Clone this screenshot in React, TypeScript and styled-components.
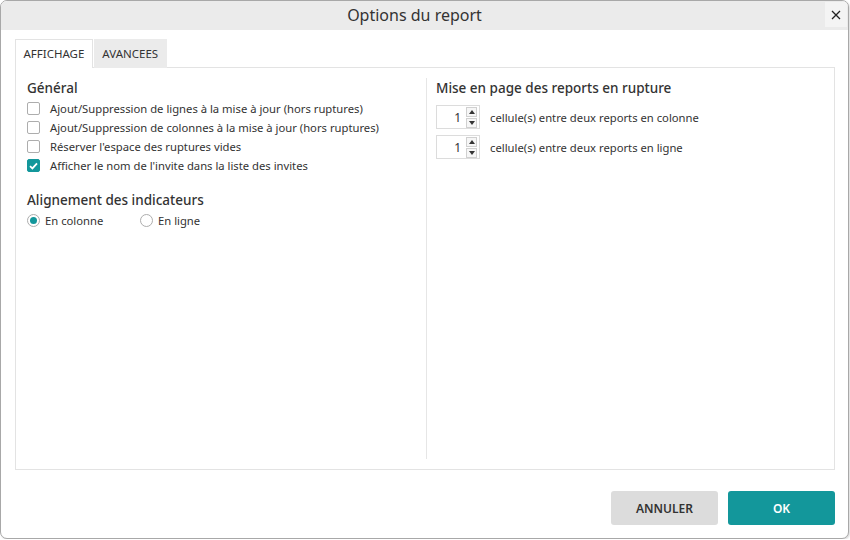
import React from "react";
import styled, { createGlobalStyle } from "styled-components";

const Global = createGlobalStyle`
  html, body { margin: 0; padding: 0; background: #ffffff; }
  body { font-family: "Noto Sans", "Open Sans", sans-serif; color: #333; }
  * { box-sizing: border-box; }
`;

const TEAL = "#13979b";

const Dialog = styled.div`
  width: 849px;
  height: 539px;
  border: 1px solid #a8a8a8;
  border-radius: 7px;
  overflow: hidden;
  background: #fff;
  display: flex;
  flex-direction: column;
  box-shadow: 1px 1px 2px rgba(0,0,0,0.15);
`;

const TitleBar = styled.div`
  height: 29px;
  background: #ebebeb;
  display: flex;
  align-items: center;
  justify-content: center;
  position: relative;
  flex: none;
  padding-right: 20px;
`;

const Title = styled.div`
  font-size: 16px;
  color: #333;
  line-height: 20px;
  margin-top: -2px;
`;

const Close = styled.div`
  position: absolute;
  right: 1px;
  top: 1px;
  width: 22px;
  height: 25px;
  background: #f4f4f4;
  display: flex;
  align-items: center;
  justify-content: center;
`;

const Body = styled.div`
  flex: 1;
  display: flex;
  flex-direction: column;
  padding: 9px 13px 0 14px;
`;

const Tabs = styled.div`
  display: flex;
  height: 28px;
  flex: none;
`;

const Tab = styled.div<{ $active?: boolean }>`
  height: 29px;
  padding: 0 7.5px 2px;
  display: flex;
  align-items: center;
  font-size: 11.5px;
  color: #333;
  background: ${(p) => (p.$active ? "#fff" : "#ebebeb")};
  border: 1px solid ${(p) => (p.$active ? "#e3e3e3" : "#ebebeb")};
  border-bottom: none;
  margin-right: 1px;
  position: relative;
  z-index: 1;
`;

const Panel = styled.div`
  height: 403px;
  border: 1px solid #e3e3e3;
  display: grid;
  grid-template-columns: 410px 1fr;
  padding: 10px 0;
`;

const Column = styled.div<{ $divider?: boolean }>`
  padding: 0 10px 0 ${(p) => (p.$divider ? "9px" : "11px")};
  border-left: ${(p) => (p.$divider ? "1px solid #e6e6e6" : "none")};
`;

const Heading = styled.div<{ $top?: number }>`
  font-size: 13.5px;
  font-weight: 500;
  color: #333;
  line-height: 20px;
  margin-top: ${(p) => p.$top ?? 0}px;
  margin-bottom: 1px;
`;

const CheckRow = styled.label`
  display: flex;
  align-items: center;
  height: 19px;
  font-size: 11.25px;
  color: #333;
`;

const Box = styled.span<{ $on?: boolean }>`
  width: 13px;
  height: 13px;
  border-radius: 2px;
  border: 1px solid ${(p) => (p.$on ? TEAL : "#adadad")};
  background: ${(p) => (p.$on ? TEAL : "#fff")};
  margin-right: 10px;
  display: flex;
  align-items: center;
  justify-content: center;
  flex: none;
`;

const RadioRow = styled.div`
  display: flex;
  align-items: center;
  height: 20px;
  margin-top: -1px;
`;

const RadioItem = styled.label`
  display: flex;
  align-items: center;
  width: 113px;
  font-size: 11.25px;
  color: #333;
`;

const Radio = styled.span<{ $on?: boolean }>`
  width: 13px;
  height: 13px;
  border-radius: 50%;
  border: 1px solid #adadad;
  background: #fff;
  margin-right: 5px;
  display: flex;
  align-items: center;
  justify-content: center;
  flex: none;
  &::after {
    content: "";
    display: ${(p) => (p.$on ? "block" : "none")};
    width: 7px;
    height: 7px;
    border-radius: 50%;
    background: ${TEAL};
  }
`;

const SpinList = styled.div`
  display: flex;
  flex-direction: column;
  gap: 6px;
  margin-top: 7px;
`;

const SpinRow = styled.div`
  display: flex;
  align-items: center;
  font-size: 11.25px;
  color: #333;
`;

const Spin = styled.div`
  width: 44px;
  height: 24px;
  border: 1px solid #dcdcdc;
  display: flex;
  align-items: center;
  margin-right: 10px;
  background: #fff;
`;

const SpinValue = styled.div`
  flex: 1;
  text-align: right;
  padding-right: 5px;
  font-size: 12px;
  color: #333;
`;

const SpinButtons = styled.div`
  display: flex;
  flex-direction: column;
  gap: 1px;
  margin-right: 2px;
`;

const SpinBtn = styled.div`
  width: 11px;
  height: 10px;
  border: 1px solid #d0d0d0;
  background: #f6f6f6;
  display: flex;
  align-items: center;
  justify-content: center;
`;

const Footer = styled.div`
  flex: 1;
  display: flex;
  justify-content: flex-end;
  align-items: center;
  gap: 10px;
  padding-top: 8px;
`;

const Button = styled.button<{ $primary?: boolean }>`
  width: 107px;
  height: 34px;
  border: none;
  border-radius: 3px;
  font-family: "Noto Sans", sans-serif;
  font-size: 12px;
  font-weight: 600;
  color: ${(p) => (p.$primary ? "#fff" : "#333")};
  background: ${(p) => (p.$primary ? TEAL : "#dcdcdc")};
`;

const Check = () => (
  <svg width="9" height="8" viewBox="0 0 9 8">
    <path d="M1 4.2 L3.4 6.4 L8 1.4" fill="none" stroke="#fff" strokeWidth="1.8" />
  </svg>
);

const Arrow = ({ up }: { up?: boolean }) => (
  <svg width="6" height="4" viewBox="0 0 6 4">
    <path d={up ? "M0 4 L3 0 L6 4 Z" : "M0 0 L3 4 L6 0 Z"} fill="#333" />
  </svg>
);

const checks = [
  { label: "Ajout/Suppression de lignes à la mise à jour (hors ruptures)", on: false },
  { label: "Ajout/Suppression de colonnes à la mise à jour (hors ruptures)", on: false },
  { label: "Réserver l'espace des ruptures vides", on: false },
  { label: "Afficher le nom de l'invite dans la liste des invites", on: true },
];

const spins = [
  "cellule(s) entre deux reports en colonne",
  "cellule(s) entre deux reports en ligne",
];

export default function App() {
  return (
    <>
      <Global />
      <Dialog>
        <TitleBar>
          <Title>Options du report</Title>
          <Close>
            <svg width="10" height="10" viewBox="0 0 10 10">
              <path d="M1 1 L9 9 M9 1 L1 9" stroke="#222" strokeWidth="1.3" />
            </svg>
          </Close>
        </TitleBar>
        <Body>
          <Tabs>
            <Tab $active>AFFICHAGE</Tab>
            <Tab>AVANCEES</Tab>
          </Tabs>
          <Panel>
            <Column>
              <Heading>Général</Heading>
              {checks.map((c) => (
                <CheckRow key={c.label}>
                  <Box $on={c.on}>{c.on && <Check />}</Box>
                  {c.label}
                </CheckRow>
              ))}
              <Heading $top={15}>Alignement des indicateurs</Heading>
              <RadioRow>
                <RadioItem>
                  <Radio $on />
                  En colonne
                </RadioItem>
                <RadioItem>
                  <Radio />
                  En ligne
                </RadioItem>
              </RadioRow>
            </Column>
            <Column $divider>
              <Heading>Mise en page des reports en rupture</Heading>
              <SpinList>
                {spins.map((s) => (
                  <SpinRow key={s}>
                    <Spin>
                      <SpinValue>1</SpinValue>
                      <SpinButtons>
                        <SpinBtn><Arrow up /></SpinBtn>
                        <SpinBtn><Arrow /></SpinBtn>
                      </SpinButtons>
                    </Spin>
                    {s}
                  </SpinRow>
                ))}
              </SpinList>
            </Column>
          </Panel>
          <Footer>
            <Button>ANNULER</Button>
            <Button $primary>OK</Button>
          </Footer>
        </Body>
      </Dialog>
    </>
  );
}
